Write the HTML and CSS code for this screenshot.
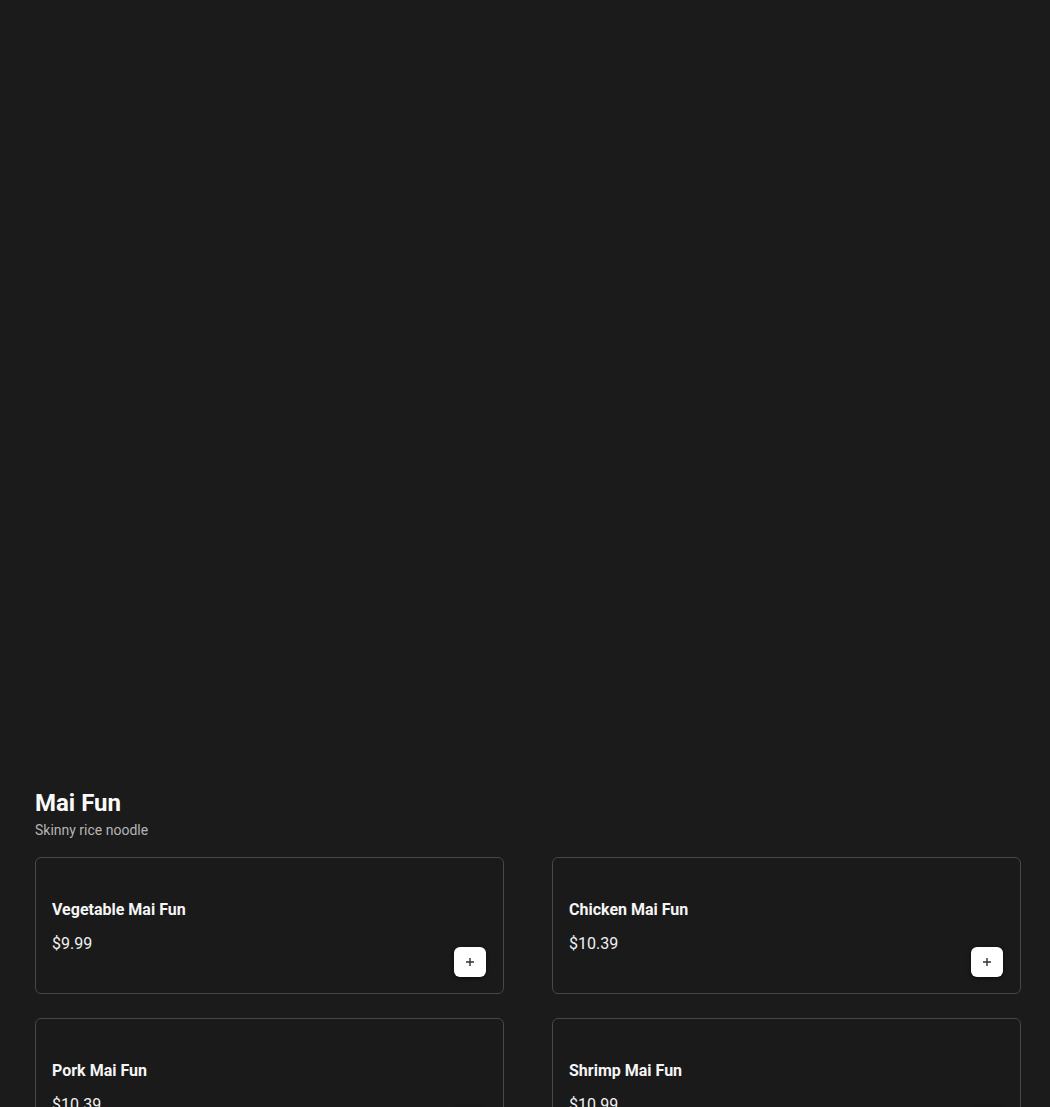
FILE: index.html
```html
<!DOCTYPE html>
<html lang="en">
<head>
    <meta charset="UTF-8">
    <meta name="viewport" content="width=device-width, initial-scale=1.0">
    <title>Mai Fun</title>
    <link rel="stylesheet" href="styles.css">
</head>
<body>
    <div class="hero"></div>

    <section class="category">
        <div class="category-header">
            <h2>Mai Fun</h2>
            <p>Skinny rice noodle</p>
        </div>

        <div class="item-grid">
            <div class="item-card">
                <div class="item-info">
                    <h3>Vegetable Mai Fun</h3>
                    <span class="price">$9.99</span>
                </div>
                <button class="add-btn" aria-label="Add">
                    <svg width="10" height="10" viewBox="0 0 10 10"><path d="M5 1v8M1 5h8" stroke="#333" stroke-width="1.4"/></svg>
                </button>
            </div>
            <div class="item-card">
                <div class="item-info">
                    <h3>Chicken Mai Fun</h3>
                    <span class="price">$10.39</span>
                </div>
                <button class="add-btn" aria-label="Add">
                    <svg width="10" height="10" viewBox="0 0 10 10"><path d="M5 1v8M1 5h8" stroke="#333" stroke-width="1.4"/></svg>
                </button>
            </div>
            <div class="item-card">
                <div class="item-info">
                    <h3>Pork Mai Fun</h3>
                    <span class="price">$10.39</span>
                </div>
                <button class="add-btn" aria-label="Add">
                    <svg width="10" height="10" viewBox="0 0 10 10"><path d="M5 1v8M1 5h8" stroke="#333" stroke-width="1.4"/></svg>
                </button>
            </div>
            <div class="item-card">
                <div class="item-info">
                    <h3>Shrimp Mai Fun</h3>
                    <span class="price">$10.99</span>
                </div>
                <button class="add-btn" aria-label="Add">
                    <svg width="10" height="10" viewBox="0 0 10 10"><path d="M5 1v8M1 5h8" stroke="#333" stroke-width="1.4"/></svg>
                </button>
            </div>
        </div>
    </section>
</body>
</html>
```

FILE: styles.css
```css
* {
    margin: 0;
    padding: 0;
    box-sizing: border-box;
}

body {
    font-family: Roboto, "Liberation Sans", sans-serif;
    background: #1b1b1b;
    color: #f5f5f5;
}

.hero {
    height: 789px;
}

.category {
    padding: 0 29px 0 35px;
}

.category-header h2 {
    font-size: 24px;
    font-weight: 700;
    line-height: 28px;
    color: #fafafa;
}

.category-header p {
    font-size: 14px;
    line-height: 20px;
    color: #b5b5b5;
    margin-top: 3px;
}

.item-grid {
    display: grid;
    grid-template-columns: 1fr 1fr;
    column-gap: 48px;
    row-gap: 24px;
    margin-top: 17px;
}

.item-card {
    display: flex;
    justify-content: space-between;
    min-height: 137px;
    padding: 42px 17px 16px 16px;
    background: #1a1a1a;
    border: 1px solid #474747;
    border-radius: 6px;
}

.item-info h3 {
    font-size: 16px;
    font-weight: 700;
    line-height: 20px;
    color: #f5f5f5;
}

.item-info .price {
    display: block;
    margin-top: 14px;
    font-size: 16px;
    line-height: 20px;
    color: #f0f0f0;
}

.add-btn {
    align-self: flex-end;
    display: flex;
    align-items: center;
    justify-content: center;
    width: 32px;
    height: 30px;
    background: #ffffff;
    border: none;
    border-radius: 6px;
    box-shadow: 0 1px 4px rgba(0, 0, 0, 0.6);
    cursor: pointer;
}
```
